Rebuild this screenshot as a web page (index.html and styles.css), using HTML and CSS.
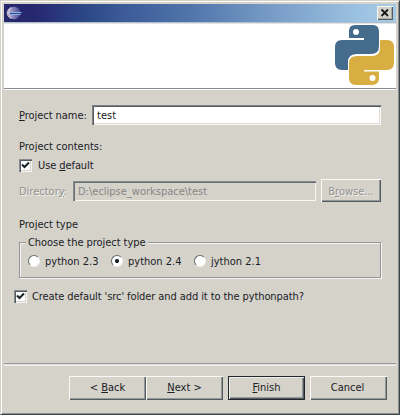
FILE: index.html
```html
<!DOCTYPE html>
<html lang="en">
<head>
<meta charset="utf-8">
<title>Project wizard</title>
<link rel="stylesheet" href="styles.css">
</head>
<body>
<div class="window">
  <header class="titlebar">
    <svg class="app-icon" width="18" height="14" viewBox="0 0 18 14">
      <defs><linearGradient id="globe"><stop offset="0" stop-color="#d5cadd"/><stop offset=".4" stop-color="#8b86ba"/><stop offset="1" stop-color="#454a92"/></linearGradient></defs>
      <circle cx="8" cy="7" r="6.2" fill="url(#globe)"/>
      <path d="M5 1.500C0 4 0 10 5 12.500" fill="none" stroke="#e1d4df" stroke-width="1"/>
      <path d="M4 6.500H15.500M4 8.500H14.500" stroke="#89b5df" stroke-width="1"/>
      <path d="M4 7.500H15" stroke="#30458d" stroke-width="1"/>
    </svg>
    <div class="close"><svg width="16" height="14" viewBox="0 0 16 14"><path d="M4.5 3.5L11 10M11 3.5L4.5 10" stroke="#15191c" stroke-width="1.8"/></svg></div>
  </header>
  <section class="banner">
    <svg class="logo" width="60" height="60" viewBox="0 0 60 60">
      <path fill="#456b8d" d="M21 0H39Q45 0 45 7V21Q45 29 37 29H23Q14 29 14 37V45H8Q1 45 1 38V22Q1 15 8 15H30V13H15V6Q15 0 21 0Z"/>
      <circle cx="22" cy="7" r="3" fill="#fff"/>
      <path fill="#d8ae43" d="M46 15H53Q60 15 60 22V37Q60 45 53 45H30V46.500H45V53Q45 60 38 60H22Q15 60 15 53V38Q15 31 23 31H38Q46 31 46 23Z"/>
      <circle cx="38.500" cy="53" r="3" fill="#fff"/>
    </svg>
  </section>
  <main class="form">
    <div class="row name-row">
      <label class="name-label"><u>P</u>roject name:</label><div class="field name-field"><span class="test">test</span></div>
    </div>
    <div class="contents-label"><span>Project contents:</span></div>
    <div class="row default-row">
      <span class="check"><svg width="9" height="9" viewBox="0 0 9 9"><path d="M1 3.500L3.500 6L8 1.500" /></svg></span><span class="check-text">Use <u>d</u>efault</span>
    </div>
    <div class="row directory-row">
      <label class="dir-label disabled">Director<u>y</u>:</label><div class="field dir-field"><span>D:\eclipse_workspace\test</span></div><div class="button browse disabled"><span>B<u>r</u>owse...</span></div>
    </div>
    <div class="type-label"><span>Project type</span></div>
    <div class="group">
      <div class="legend"><span>Choose the project type</span></div>
      <div class="radios">
        <div class="option"><span class="radio"></span><span class="radio-text">python 2.3</span></div>
        <div class="option"><span class="radio on"></span><span class="radio-text">python 2.4</span></div>
        <div class="option"><span class="radio"></span><span class="radio-text">jython 2.1</span></div>
      </div>
    </div>
    <div class="row create-row">
      <span class="check"><svg width="9" height="9" viewBox="0 0 9 9"><path d="M1 3.500L3.500 6L8 1.500" /></svg></span><span class="check-text">Create default 'src' folder and add it to the pythonpath?</span>
    </div>
  </main>
  <footer class="actions">
    <div class="button"><span>&lt; <u>B</u>ack</span></div>
    <div class="button"><span><u>N</u>ext &gt;</span></div>
    <div class="button primary"><span><u>F</u>inish</span></div>
    <div class="button cancel"><span>Cancel</span></div>
  </footer>
</div>
</body>
</html>
```
FILE: styles.css
```css
* { box-sizing: border-box; }
body { margin: 0; font: 11px/14px "DejaVu Sans Condensed", "DejaVu Sans", sans-serif; font-stretch: condensed; color: #1a2125; background: #d5d2ca; }
span, label { white-space: pre; }
u { text-decoration-thickness: 1px; text-underline-offset: 1px; }
.window { width: 400px; height: 415px; padding: 3px 2px 0; border: 1px solid #d5d2ca; border-right-color: #3e464a; border-bottom-color: #3e464a; box-shadow: inset 1px 1px #fff, inset -1px -1px #8b8f92; display: flex; flex-direction: column; }
.window > * { margin-left: 1px; margin-right: 1px; flex: none; }
.titlebar { height: 18px; background: linear-gradient(90deg, #26286e 0 30px, #29327a 48px, #2b4685 78px, #3c5b98 120px, #5074aa 185px, #7094c1 250px, #9cc2e2 355px, #a5cae5); display: flex; align-items: center; justify-content: space-between; padding: 0 3px 0 2px; }
.app-icon { display: block; }
.close { width: 16px; height: 14px; background: #d5d2ca; box-shadow: inset 1px 1px #f5f4ef, inset -1px -1px #555d62, inset -2px -2px #aaa9a5; }
.close svg { display: block; }
.banner { height: 68px; background: #fff; border-top: 1px solid #b1bfd0; border-bottom: 1px solid #fff; box-shadow: inset 0 1px #e2e4e3, inset 0 -1px #858a8e; display: flex; justify-content: flex-end; padding: 2px 2px 0 0; }
.logo { display: block; }
.form { height: 273px; padding: 15px 15px 0; }
.row { display: flex; align-items: center; }
.field { box-shadow: inset 1px 1px #7d8387, inset 2px 2px #535b60, inset -1px -1px #f8f7f3, inset -2px -2px #deddd7; display: flex; align-items: center; }
.field span, .name-label, .dir-label, .browse span, .radio-text { padding-top: 2px; }
.name-row { height: 20px; }
.name-label { width: 73px; letter-spacing: -.05px; }
.name-field { width: 289px; height: 20px; background: #fff; padding-left: 5px; }
.contents-label { margin-top: 15px; height: 14px; }
.default-row { margin-top: 5px; height: 13px; }
.check { width: 13px; height: 13px; background: #fff; box-shadow: inset 1px 1px #858b8e, inset 2px 2px #535b60, inset -1px -1px #f8f7f3, inset -2px -2px #d5d2ca; padding: 2px; flex: none; margin-right: 6px; }
.check svg { display: block; fill: none; stroke: #172025; stroke-width: 2; }
.check-text { padding-top: 1px; letter-spacing: -.09px; }
.directory-row { height: 23px; margin-top: 7px; }
.dir-label { width: 54px; }
.disabled { color: #929392; text-shadow: 1px 1px #f0efea; }
.dir-field { height: 20px; width: 243px; padding-left: 5px; color: #858786; box-shadow: inset 1px 1px #858b8e, inset 2px 2px #686e72, inset -1px -1px #f8f7f3; }
.button { width: 77px; height: 24px; display: flex; align-items: center; justify-content: center; box-shadow: inset 1px 1px #f9f8f5, inset -1px -1px #535b60, inset -2px -2px #929799; }
.browse { width: 60px; height: 23px; margin-left: 5px; }
.type-label { margin-top: 16px; height: 14px; }
.group { margin-top: 10px; width: 362px; height: 36px; border: 1px solid #92979a; box-shadow: inset 1px 1px #f4f3ef, 1px 1px #f4f3ef; }
.legend { height: 14px; width: 122px; margin: -7px 0 0 6px; padding-left: 2px; background: #d5d2ca; letter-spacing: -.05px; }
.radios { display: flex; padding: 4px 0 0 8px; }
.option { display: flex; align-items: center; width: 83px; height: 14px; }
.radio { width: 12px; height: 12px; border-radius: 50%; margin-right: 5px; flex: none; background: #fff; border: 1px solid; border-color: #656c70 #f1f0ec #f1f0ec #656c70; }
.on { background: radial-gradient(circle, #20272b 0 1.8px, #fff 2.4px); }
.create-row { height: 13px; margin: 12px 0 0 -5px; }
.create-row .check { margin-right: 5px; }
.actions { height: 50px; border-top: 1px solid #959a9d; box-shadow: inset 0 1px #e2e0da, inset 0 2px #efeeea; display: flex; padding: 12px 0 0 65px; }
.cancel { padding-right: 2px; }
.primary { margin: 0 5px; border: 1px solid #20272b; box-shadow: inset 1px 1px #eee, inset -1px -1px #535b60, inset -2px -2px #929799; }
```
